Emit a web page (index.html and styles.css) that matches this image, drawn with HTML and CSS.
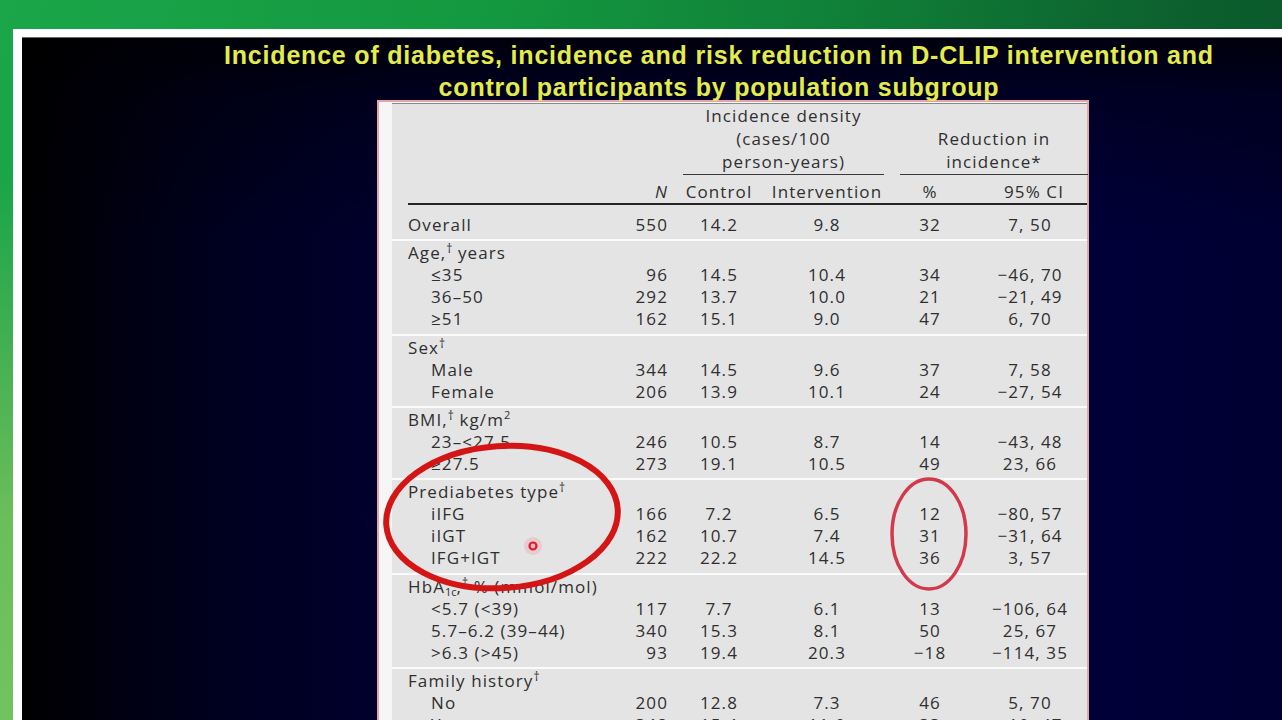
FILE: index.html
```html
<!DOCTYPE html>
<html lang="en">
<head>
<meta charset="utf-8">
<title>D-CLIP subgroup table</title>
<link rel="stylesheet" href="styles.css">
</head>
<body>
<div class="frame">
  <div class="slide">
    <h1 class="title">Incidence of diabetes, incidence and risk reduction in D-CLIP intervention and<br>control participants by population subgroup</h1>
    <div class="table">
      <div class="sheet">
        <div class="head-top">
          <div class="h-dens">Incidence density<br>(cases/100<br>person-years)</div>
          <div class="h-red">Reduction in<br>incidence*</div>
        </div>
        <div class="row cols">
          <span class="lbl"></span><span class="n"><i>N</i></span><span>Control</span><span>Intervention</span><span>%</span><span class="ci-h">95% CI</span>
        </div>
        <div class="rule"></div>

        <div class="group first">
          <div class="row"><span class="lbl">Overall</span><span class="n">550</span><span>14.2</span><span>9.8</span><span>32</span><span>7, 50</span></div>
        </div>

        <div class="group">
          <div class="row"><span class="lbl">Age,<sup>†</sup> years</span></div>
          <div class="row"><span class="lbl sub">≤35</span><span class="n">96</span><span>14.5</span><span>10.4</span><span>34</span><span>−46, 70</span></div>
          <div class="row"><span class="lbl sub">36–50</span><span class="n">292</span><span>13.7</span><span>10.0</span><span>21</span><span>−21, 49</span></div>
          <div class="row"><span class="lbl sub">≥51</span><span class="n">162</span><span>15.1</span><span>9.0</span><span>47</span><span>6, 70</span></div>
        </div>

        <div class="group">
          <div class="row"><span class="lbl">Sex<sup>†</sup></span></div>
          <div class="row"><span class="lbl sub">Male</span><span class="n">344</span><span>14.5</span><span>9.6</span><span>37</span><span>7, 58</span></div>
          <div class="row"><span class="lbl sub">Female</span><span class="n">206</span><span>13.9</span><span>10.1</span><span>24</span><span>−27, 54</span></div>
        </div>

        <div class="group">
          <div class="row"><span class="lbl">BMI,<sup>†</sup> kg/m<sup class="sq">2</sup></span></div>
          <div class="row"><span class="lbl sub">23–&lt;27.5</span><span class="n">246</span><span>10.5</span><span>8.7</span><span>14</span><span>−43, 48</span></div>
          <div class="row"><span class="lbl sub">≥27.5</span><span class="n">273</span><span>19.1</span><span>10.5</span><span>49</span><span>23, 66</span></div>
        </div>

        <div class="group">
          <div class="row"><span class="lbl">Prediabetes type<sup>†</sup></span></div>
          <div class="row"><span class="lbl sub">iIFG</span><span class="n">166</span><span>7.2</span><span>6.5</span><span>12</span><span>−80, 57</span></div>
          <div class="row"><span class="lbl sub">iIGT</span><span class="n">162</span><span>10.7</span><span>7.4</span><span>31</span><span>−31, 64</span></div>
          <div class="row"><span class="lbl sub">IFG+IGT</span><span class="n">222</span><span>22.2</span><span>14.5</span><span>36</span><span>3, 57</span></div>
        </div>

        <div class="group">
          <div class="row"><span class="lbl">HbA<sub>1c</sub>,<sup>†</sup> % (mmol/mol)</span></div>
          <div class="row"><span class="lbl sub">&lt;5.7 (&lt;39)</span><span class="n">117</span><span>7.7</span><span>6.1</span><span>13</span><span>−106, 64</span></div>
          <div class="row"><span class="lbl sub">5.7–6.2 (39–44)</span><span class="n">340</span><span>15.3</span><span>8.1</span><span>50</span><span>25, 67</span></div>
          <div class="row"><span class="lbl sub">&gt;6.3 (&gt;45)</span><span class="n">93</span><span>19.4</span><span>20.3</span><span>−18</span><span>−114, 35</span></div>
        </div>

        <div class="group">
          <div class="row"><span class="lbl">Family history<sup>†</sup></span></div>
          <div class="row"><span class="lbl sub">No</span><span class="n">200</span><span>12.8</span><span>7.3</span><span>46</span><span>5, 70</span></div>
          <div class="row"><span class="lbl sub">Yes</span><span class="n">348</span><span>15.4</span><span>11.0</span><span>33</span><span>−10, 47</span></div>
        </div>
      </div>
    </div>
  </div>
</div>

<svg class="marks" width="1282" height="720" viewBox="0 0 1282 720" aria-hidden="true">
  <ellipse cx="502" cy="517" rx="116" ry="71" transform="rotate(-4 502 517)" fill="none" stroke="#d41515" stroke-width="6"/>
  <ellipse cx="929" cy="534" rx="37" ry="55" fill="none" stroke="#d23a4c" stroke-width="3.5"/>
  <circle cx="533" cy="546" r="9" fill="#f08090" opacity="0.25"/>
  <circle cx="533" cy="546" r="3.5" fill="#f3b0b8" stroke="#dd1c2c" stroke-width="2.2"/>
</svg>
</body>
</html>
```

FILE: styles.css
```css
html, body {
  margin: 0;
  padding: 0;
}

body {
  width: 1282px;
  height: 720px;
  overflow: hidden;
  position: relative;
  font-family: "Open Sans", "DejaVu Sans", sans-serif;
  background:
    linear-gradient(180deg, rgba(110,190,92,0) 0px, rgba(110,190,92,0) 180px, #6cbd5c 520px, #72c262 720px) left top / 13px 100% no-repeat,
    linear-gradient(100deg, #1ba64a 0%, #14983f 35%, #108038 60%, #0c5f2d 85%, #0a552a 100%);
}

.frame {
  margin: 29px 0 0 13px;
  padding: 8px 0 0 9px;
  background: #ffffff;
  height: 720px;
}

.slide {
  width: 1394px;
  height: 720px;
  border-top: 1px solid #6a6a6a;
  background:
    linear-gradient(180deg, rgba(0,0,0,0.75) 0px, rgba(0,0,0,0.35) 60px, rgba(0,0,0,0) 200px),
    linear-gradient(90deg, #000000 0%, #00000f 6%, #00001f 14%, #000030 28%, #000038 50%, #00003a 75%, #00002c 100%);
}

.title {
  margin: 0;
  padding-top: 1px;
  font-family: "Liberation Sans", Arial, sans-serif;
  font-weight: bold;
  font-size: 25px;
  letter-spacing: 0.8px;
  line-height: 32px;
  color: #e4ec4c;
  text-align: center;
}

.table {
  box-sizing: border-box;
  width: 712px;
  height: 640px;
  margin: -3px 0 0 355px;
  border: 2px solid #e7a2aa;
  border-bottom: none;
  padding-left: 13px;
  background: #f6f6f6;
}

.sheet {
  margin-top: 1px;
  height: 100%;
  border-top: 1.5px solid #8a8a8a;
  background: #e4e4e4;
  color: #2f2f2f;
  font-size: 17px;
  letter-spacing: 1.1px;
}

.head-top,
.row {
  display: grid;
  grid-template-columns: 240px 40px 94px 122px 84px 116px;
}

.head-top {
  line-height: 23px;
  text-align: center;
}

.h-dens {
  grid-column: 3 / 5;
  margin: 0 4px 0 11px;
  padding-bottom: 1px;
  border-bottom: 1.5px solid #3a3a3a;
}

.h-red {
  grid-column: 5 / 7;
  align-self: end;
  margin: 0 0 0 12px;
  padding-bottom: 1px;
  border-bottom: 1.5px solid #3a3a3a;
}

.cols {
  margin-top: 6px;
  line-height: 23px;
}

.ci-h {
  padding-left: 8px;
}

.rule {
  margin-left: 16px;
  height: 2px;
  background: #262626;
}

.row {
  line-height: 22.1px;
  white-space: nowrap;
}

.row span {
  text-align: center;
}

.row .lbl {
  text-align: left;
  padding-left: 16px;
}

.row .lbl.sub {
  padding-left: 39px;
}

.row .n {
  text-align: right;
  padding-right: 4px;
}

.group {
  padding: 1px 0 3px;
  border-top: 2px solid #fbfbfb;
}

.group.first {
  padding-top: 9px;
  border-top: none;
}

sup {
  font-size: 12px;
  line-height: 0;
  vertical-align: 6px;
  letter-spacing: 0;
}

sup.sq {
  font-size: 11px;
  vertical-align: 7px;
}

sub {
  font-size: 11px;
  line-height: 0;
  vertical-align: -3px;
  letter-spacing: 0;
}

.marks {
  position: absolute;
  left: 0;
  top: 0;
  pointer-events: none;
}
```
